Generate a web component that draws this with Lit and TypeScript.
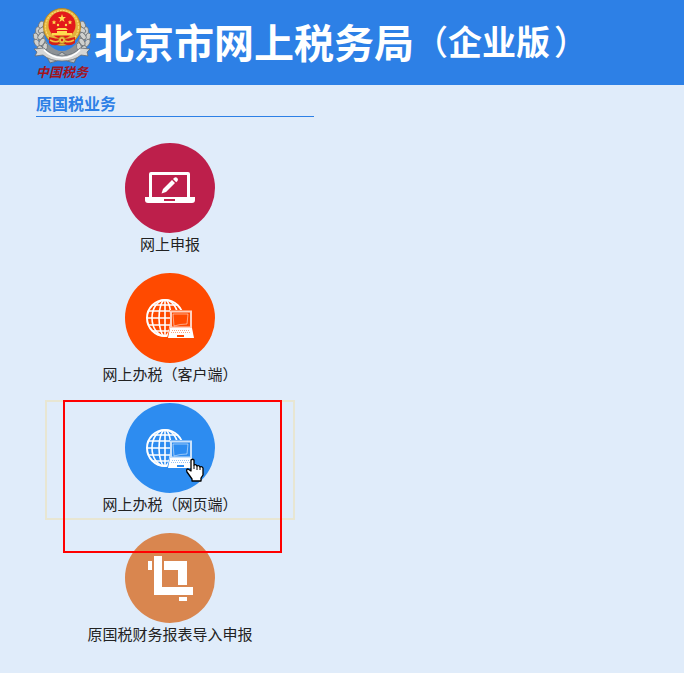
import { LitElement, html, css, svg } from "lit";
import { customElement } from "lit/decorators.js";
import { classMap } from "lit/directives/class-map.js";

type IconName = "laptop" | "globe" | "crop";

interface Service {
  label: string;
  icon: IconName;
  tone: string;
  active?: boolean;
}

const SERVICES: Service[] = [
  { label: "网上申报", icon: "laptop", tone: "crimson" },
  { label: "网上办税（客户端）", icon: "globe", tone: "orange" },
  { label: "网上办税（网页端）", icon: "globe", tone: "blue", active: true },
  { label: "原国税财务报表导入申报", icon: "crop", tone: "tan" },
];

@customElement("tax-emblem")
class TaxEmblem extends LitElement {
  static styles = css`
    :host {
      display: flex;
      flex-direction: column;
      align-items: center;
      width: 60px;
    }
    .badge {
      display: block;
      width: 60px;
      height: 58px;
    }
    .name {
      color: #a3141c;
      font: italic 700 13px/14px "Noto Sans CJK SC", sans-serif;
      white-space: nowrap;
    }
  `;

  private leaves(side: 1 | -1) {
    const points = [
      [-21, -8, 20], [-24, -2, 0], [-26, 4, -15], [-25, 10, -30], [-21, 16, -45], [-15, 21, -60],
      [-20, -3, 60], [-21, 3, 40], [-20, 9, 30], [-17, 14, 10],
    ];
    return points.map(
      ([x, y, a]) => svg`<ellipse cx=${30 + side * x} cy=${26 + y} rx="2.4" ry="4.2"
        transform="rotate(${side * a} ${30 + side * x} ${26 + y})"
        fill="#cfd0ce" stroke="#6d7276" stroke-width=".8"/>`
    );
  }

  render() {
    return html`
      <svg class="badge" viewBox="0 0 60 58" aria-hidden="true">
        <path d="M11 17q-5 14 3 22q8 8 16 8t16-8q8-8 3-22" fill="none" stroke="#8d9296" stroke-width="6"/>
        ${this.leaves(1)} ${this.leaves(-1)}
        <path d="M15 50q9 1 15-5q6 6 15 5l-3 6q-7-1-12-6q-5 5-12 6z" fill="#b9bcbd" stroke="#59626c" stroke-width=".8"/>
        <path d="M2 42l10-1q6 7 18 8q12-1 18-8l10 1l-3 3l1 4l-7-1q-7 6-19 6q-12 0-19-6l-8 1l2-4z" fill="#d5d6d6" stroke="#656b72" stroke-width=".8"/>
        <path d="M12 43q8 8 18 8q10 0 18-8" fill="none" stroke="#fff" stroke-width="1.5"/>
        <circle cx="30" cy="20" r="18.500" fill="#e4b33b" stroke="#b87d17" stroke-width=".8"/>
        <circle cx="30" cy="20" r="16.500" fill="none" stroke="#f8d976" stroke-width="1.2" stroke-dasharray="2 1"/>
        <circle cx="30" cy="18" r="13.5" fill="#e3191b"/>
        <path d="M17 30q13 4 26 0v6q-4 3-8 2l-5-2l-5 2q-5 1-8-2z" fill="#d32119"/>
        <path d="M30 7l1 3h3l-2.400 2l1 3l-2.600-1.800l-2.600 1.800l1-3l-2.400-2h3z" fill="#ffdc50"/>
        <g fill="#ffdc50">
          <path d="M22 13l.7 1.400l1.600.2l-1.200 1l.3 1.600l-1.400-.8l-1.400.8l.3-1.600l-1.200-1l1.600-.2z"/>
          <path d="M38 13l.7 1.400l1.600.2l-1.200 1l.3 1.600l-1.400-.8l-1.400.8l.3-1.600l-1.200-1l1.600-.2z"/>
          <circle cx="26" cy="18" r="1.200"/><circle cx="34" cy="18" r="1.200"/>
          <path d="M24 23l2-2h8l2 2zM25 24h10v2h-10zM20 26h20v2.500h-20z"/>
        </g>
        <circle cx="30" cy="33" r="3.500" fill="#f0c242" stroke="#a96b12" stroke-width=".8"/>
        <circle cx="30" cy="33" r="1.200" fill="#d32119"/>
        <path d="M18 33q5 3 9 1M42 33q-5 3-9 1" fill="none" stroke="#f0c242" stroke-width="1.500"/>
      </svg>
      <span class="name">中国税务</span>
    `;
  }
}

@customElement("service-icon")
class ServiceIcon extends LitElement {
  static properties = { name: { type: String } };
  declare name: IconName;

  static styles = css`
    :host,
    svg {
      display: block;
      width: 90px;
      height: 90px;
    }
  `;

  private laptop() {
    return svg`
      <path fill-rule="evenodd" fill="#fff" d="M26 29h37q2 0 2 2v23h-41v-23q0-2 2-2zm1 3v22h35v-22z"/>
      <path fill="#fff" d="M20 54h50v3q0 3-3 3h-44q-3 0-3-3z"/>
      <rect x="39" y="56" width="11" height="2" fill="#bd1f4b"/>
      <path fill="#fff" d="M36.500 50.500l1.500-4.500l9-9l3 3l-9 9zM48 36l1.300-1.300q1.500-1 3 .3q1.300 1.500.2 3l-1.300 1.300z"/>`;
  }

  private globe() {
    return svg`
      <g fill="none" stroke="#fff" stroke-width="2">
        <circle cx="40" cy="45" r="18"/>
        <ellipse cx="40" cy="45" rx="13" ry="18" stroke-width="1.600"/>
        <ellipse cx="40" cy="45" rx="6" ry="18" stroke-width="1.600"/>
        <path d="M40 27v36M22 45h36M24 38h32M28 32h24M24 52h32M28 58h24" stroke-width="1.600"/>
      </g>
      <path d="M45 37h22v17l3 11h-28l3-11z" fill="currentColor"/>
      <rect x="46" y="38.500" width="20" height="16" fill="none" stroke="#fff" stroke-opacity=".75" stroke-width="2"/>
      <path d="M48 41h15l-1 10q-7 0-13 2z" fill="none" stroke="#fff" stroke-opacity=".5"/>
      <path d="M45 55h22l2 10h-26z" fill="#fff"/>
      <path d="M47 57.500h18M46 59.500h20" stroke="currentColor" stroke-opacity=".5" stroke-dasharray="1 1"/>
      <rect x="52" y="62" width="7" height="2" fill="currentColor"/>`;
  }

  private crop() {
    return svg`
      <g fill="#fff">
        <path d="M23 28h4v9h-4zM39 28h23v24h-9v-15h-14zM54 64h8v4h-8z"/>
        <path d="M29 23h8v31h31v8h-39z"/>
      </g>`;
  }

  render() {
    const art = this.name === "laptop" ? this.laptop() : this.name === "globe" ? this.globe() : this.crop();
    return html`<svg viewBox="0 0 90 90" aria-hidden="true">${art}</svg>`;
  }
}

@customElement("app-root")
class AppRoot extends LitElement {
  static styles = css`
    :host {
      display: block;
      min-height: 100vh;
      background: #e0ecfa;
      color: #222;
      font-family: "Noto Sans CJK SC", sans-serif;
    }
    .header {
      display: flex;
      align-items: flex-start;
      gap: 2px;
      padding: 7px 32px 6px;
      background: #2d80e6;
      color: #fff;
    }
    .title {
      display: flex;
      align-items: center;
      margin: 0;
      font-size: 40px;
      line-height: 68px;
      font-weight: 700;
      white-space: nowrap;
    }
    .edition {
      font-size: 34px;
    }
    .paren {
      font-weight: 500;
    }
    .close {
      padding-left: 4px;
    }
    .section {
      max-width: 278px;
      padding: 8px 36px 0;
    }
    .heading {
      margin: 0;
      padding-bottom: 2px;
      border-bottom: 1px solid #2d80e6;
      color: #2d80e6;
      font-size: 16px;
      line-height: 21px;
      font-weight: 700;
    }
    .list {
      display: flex;
      flex-direction: column;
      gap: 10px;
      width: 250px;
      margin: 23px 0 0;
      padding: 0 9px 20px;
      list-style: none;
    }
    .item {
      position: relative;
    }
    .link {
      display: flex;
      flex-direction: column;
      align-items: center;
      padding: 1px 0 4px;
      border: 2px solid transparent;
      color: inherit;
      font-size: 15px;
      line-height: 21px;
      text-decoration: none;
      white-space: nowrap;
    }
    .active {
      border-color: #e8e6d2;
    }
    .disc {
      border-radius: 50%;
    }
    .crimson {
      background: #bd1f4b;
    }
    .orange {
      background: #ff4a00;
      color: #ff4a00;
    }
    .blue {
      background: #2d8cf0;
      color: #2d8cf0;
    }
    .tan {
      background: #d9864f;
    }
    .frame {
      position: absolute;
      z-index: 1;
      top: 0;
      left: 18px;
      box-sizing: border-box;
      width: 219px;
      height: 153px;
      border: 2px solid #f00;
      pointer-events: none;
    }
    .pointer {
      position: absolute;
      z-index: 2;
      top: 58px;
      left: 141px;
      width: 18px;
      height: 24px;
      pointer-events: none;
    }
  `;

  private marks() {
    return html`
      <div class="frame"></div>
      <svg class="pointer" viewBox="0 0 18 24" aria-hidden="true">
        <path d="M5 2q1.500-1.500 3 0v5q2-1 3 1q2-1 3 1q2-1 3 1v7l-2 3v3h-9v-2l-5-7q-1-3 1-3l3 2z"
          fill="#fff" stroke="#000" stroke-width="1.300" stroke-linejoin="round"/>
        <path d="M8 7v4M11 8v4M14 9v3" stroke="#000" fill="none"/>
      </svg>
    `;
  }

  render() {
    return html`
      <header class="header">
        <tax-emblem></tax-emblem>
        <h1 class="title">
          <span>北京市网上税务局</span>
          <span class="edition"><span class="paren">（</span>企业版<span class="paren close">）</span></span>
        </h1>
      </header>
      <main class="section">
        <h2 class="heading">原国税业务</h2>
        <ul class="list">
          ${SERVICES.map(
            (s) => html`
              <li class="item">
                <a class=${classMap({ link: true, active: !!s.active })} href="#">
                  <service-icon class="disc ${s.tone}" .name=${s.icon}></service-icon>
                  <span>${s.label}</span>
                </a>
                ${s.active ? this.marks() : ""}
              </li>
            `
          )}
        </ul>
      </main>
    `;
  }
}
